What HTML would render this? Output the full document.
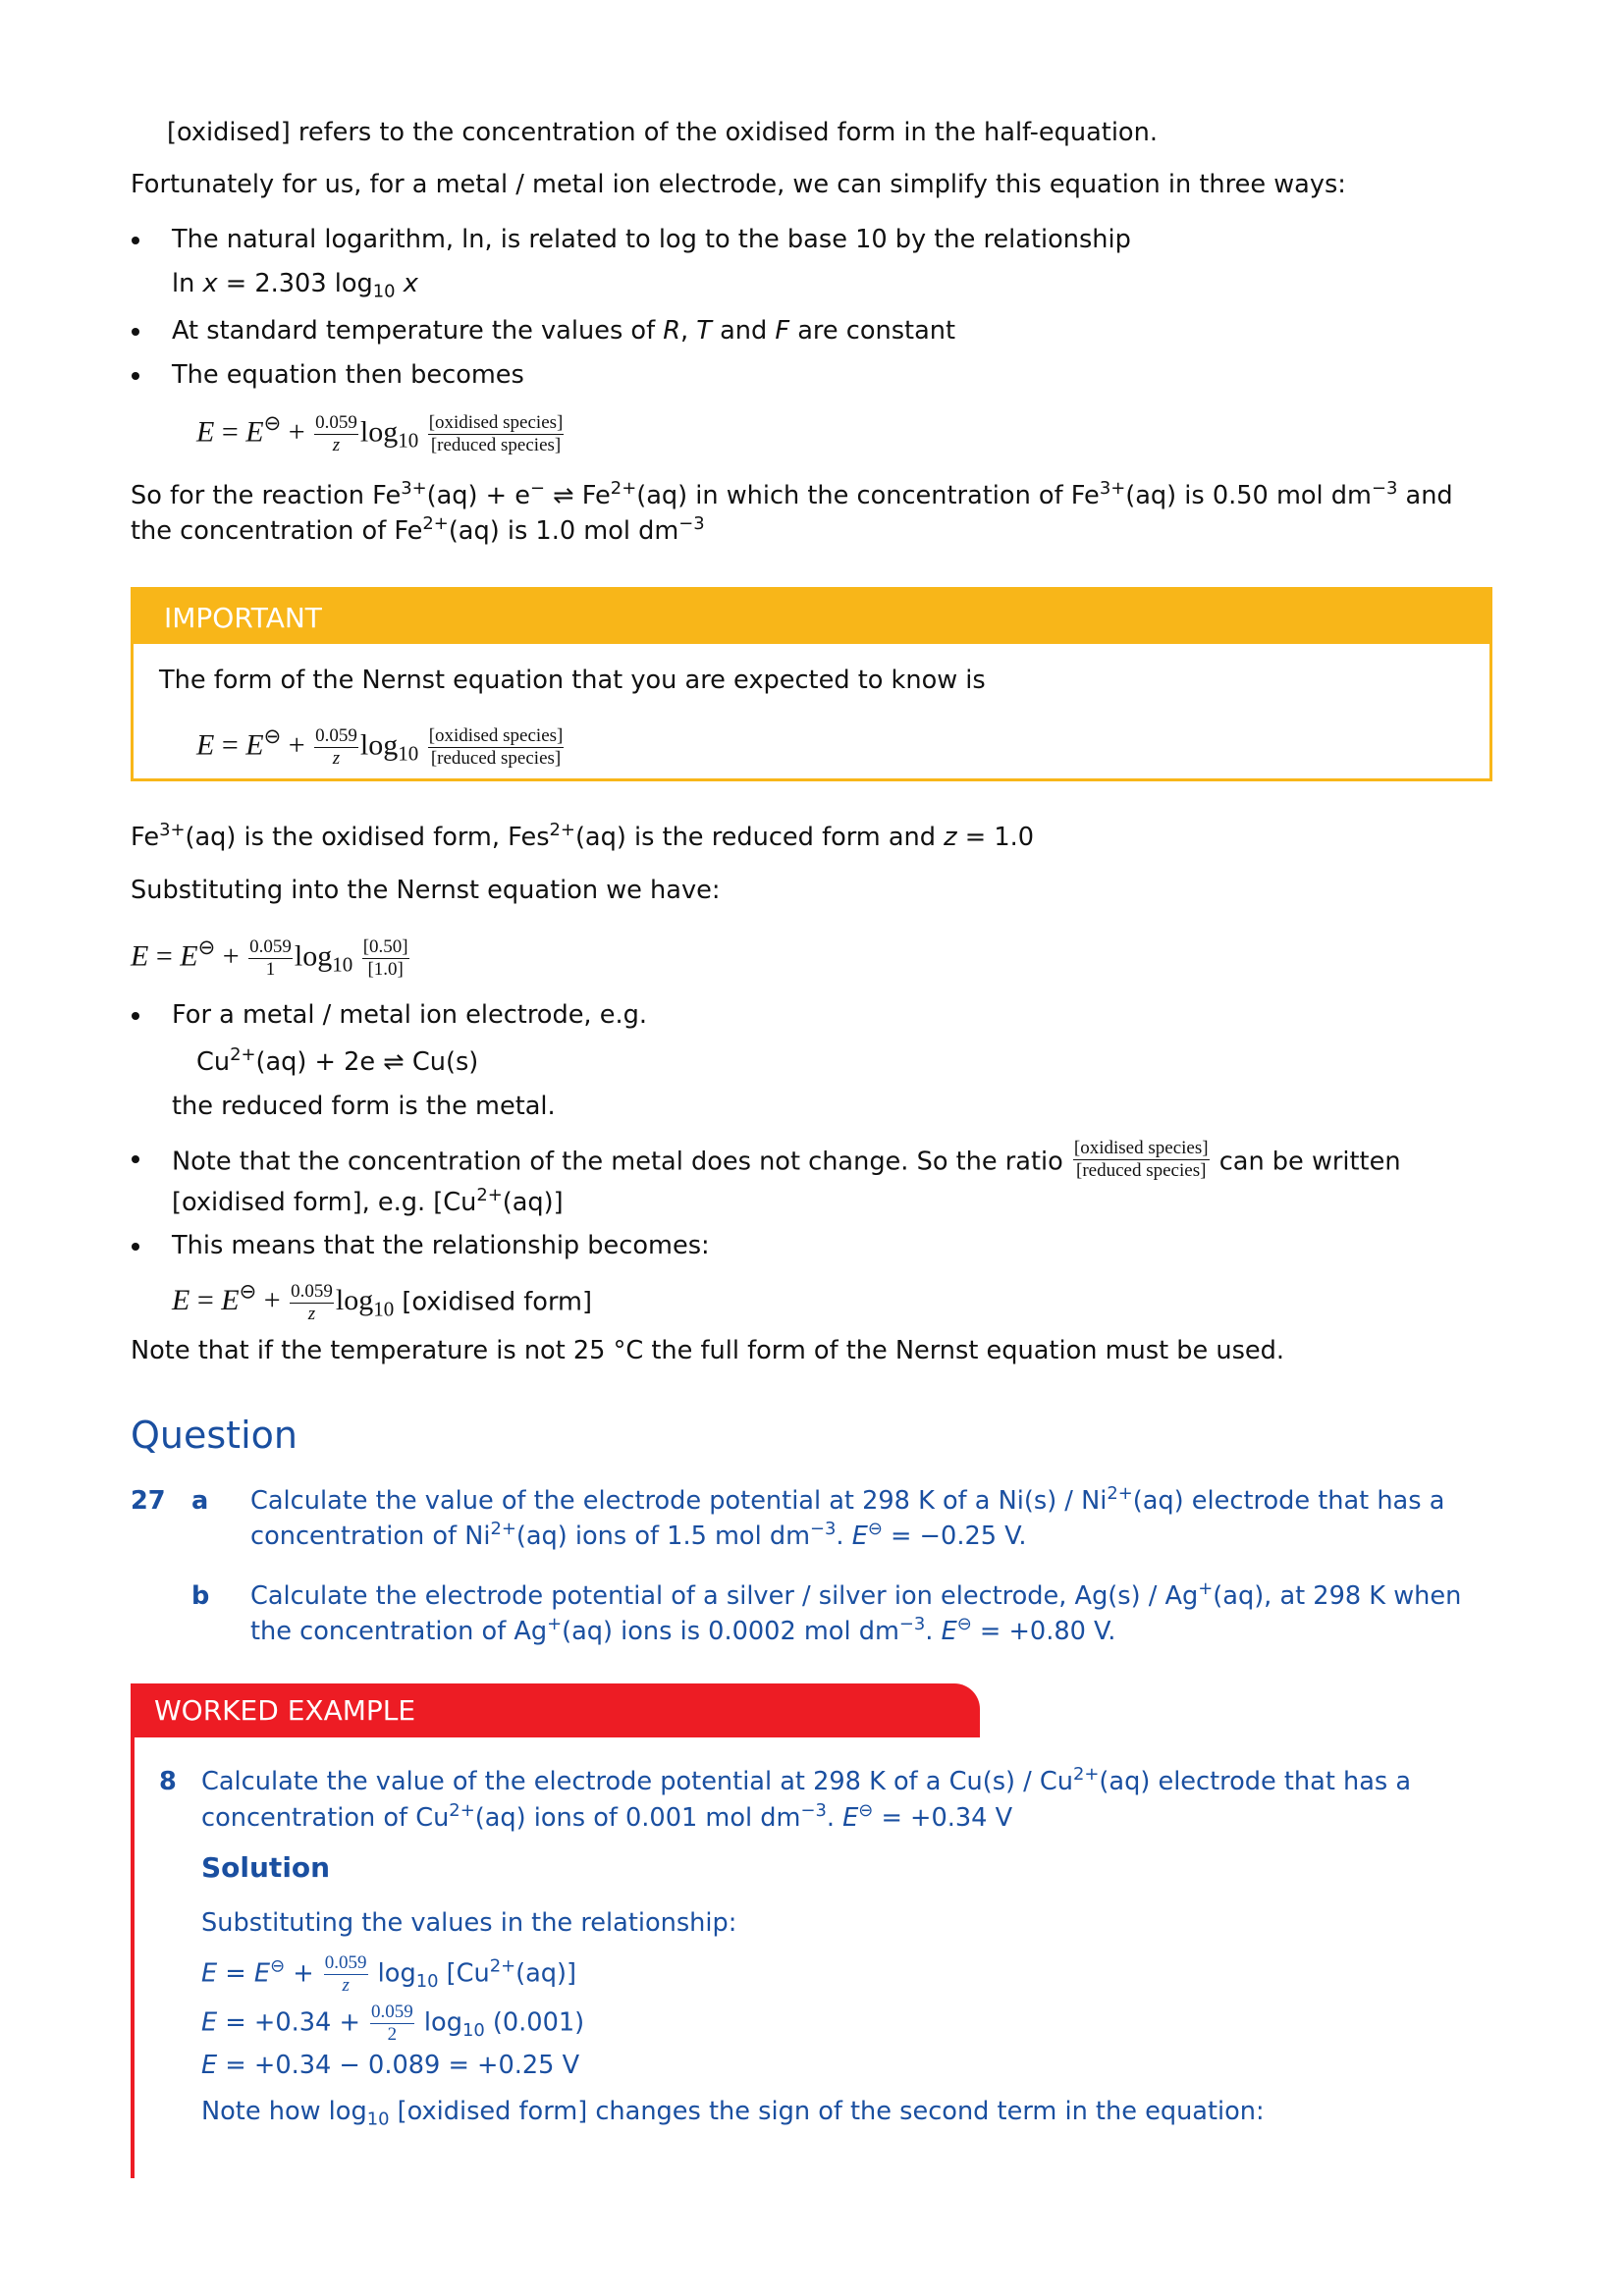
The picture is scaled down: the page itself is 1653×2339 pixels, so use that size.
<!DOCTYPE html>
<html><head><meta charset="utf-8"><style>
body{margin:0;width:1653px;height:2339px;background:#fff;position:relative;font-family:"DejaVu Sans","Liberation Sans",sans-serif;font-size:25.6px;color:#111;}
.l{position:absolute;white-space:nowrap;line-height:30px;}
.b{color:#1a4fa0}
sup{font-size:0.7em;vertical-align:0.55em;line-height:0}
sub{font-size:0.7em;vertical-align:-0.3em;line-height:0}
.dot{position:absolute;width:8px;height:8px;border-radius:50%;background:#111;}
.fr{display:inline-block;vertical-align:middle;text-align:center;font-family:"Liberation Serif",serif;font-size:19px;line-height:22px;margin:0 2px}
.fr span{display:block;padding:0 1px}
.fr span:first-child{border-bottom:1.5px solid currentColor}
.ls{font-family:"Liberation Serif",serif;font-size:30px}
i{font-style:italic}
</style></head><body>

<div class="l" style="left:170px;top:120px">[oxidised] refers to the concentration of the oxidised form in the half-equation.</div>
<div class="l" style="left:133px;top:173px">Fortunately for us, for a metal / metal ion electrode, we can simplify this equation in three ways:</div>
<div class="dot" style="left:134px;top:241px"></div>
<div class="l" style="left:175px;top:229px">The natural logarithm, ln, is related to log to the base 10 by the relationship</div>
<div class="l" style="left:175px;top:274px">ln <i>x</i> = 2.303 log<sub>10</sub> <i>x</i></div>
<div class="dot" style="left:134px;top:334px"></div>
<div class="l" style="left:175px;top:322px">At standard temperature the values of <i>R</i>, <i>T</i> and <i>F</i> are constant</div>
<div class="dot" style="left:134px;top:379px"></div>
<div class="l" style="left:175px;top:367px">The equation then becomes</div>
<div class="l ls" style="left:200px;top:420px"><i>E</i> = <i>E</i><sup>⊖</sup> + <span class="fr"><span>0.059</span><span><i>z</i></span></span>log<sub>10</sub> <span class="fr"><span>[oxidised species]</span><span>[reduced species]</span></span></div>
<div class="l" style="left:133px;top:490px">So for the reaction Fe<sup>3+</sup>(aq) + e<sup>−</sup> ⇌ Fe<sup>2+</sup>(aq) in which the concentration of Fe<sup>3+</sup>(aq) is 0.50 mol dm<sup>−3</sup> and</div>
<div class="l" style="left:133px;top:526px">the concentration of Fe<sup>2+</sup>(aq) is 1.0 mol dm<sup>−3</sup></div>

<div style="position:absolute;left:133px;top:598px;width:1381px;height:195px;border:3px solid #F8B619;border-top:none"></div>
<div style="position:absolute;left:133px;top:598px;width:1387px;height:58px;background:#F8B619"></div>
<div class="l" style="left:167px;top:615px;color:#fff;font-size:28px">IMPORTANT</div>
<div class="l" style="left:162px;top:678px">The form of the Nernst equation that you are expected to know is</div>
<div class="l ls" style="left:200px;top:739px"><i>E</i> = <i>E</i><sup>⊖</sup> + <span class="fr"><span>0.059</span><span><i>z</i></span></span>log<sub>10</sub> <span class="fr"><span>[oxidised species]</span><span>[reduced species]</span></span></div>

<div class="l" style="left:133px;top:838px">Fe<sup>3+</sup>(aq) is the oxidised form, Fes<sup>2+</sup>(aq) is the reduced form and <i>z</i> = 1.0</div>
<div class="l" style="left:133px;top:892px">Substituting into the Nernst equation we have:</div>
<div class="l ls" style="left:133px;top:954px"><i>E</i> = <i>E</i><sup>⊖</sup> + <span class="fr"><span>0.059</span><span>1</span></span>log<sub>10</sub> <span class="fr"><span>[0.50]</span><span>[1.0]</span></span></div>

<div class="dot" style="left:134px;top:1031px"></div>
<div class="l" style="left:175px;top:1019px">For a metal / metal ion electrode, e.g.</div>
<div class="l" style="left:200px;top:1067px">Cu<sup>2+</sup>(aq) + 2e ⇌ Cu(s)</div>
<div class="l" style="left:175px;top:1112px">the reduced form is the metal.</div>
<div class="dot" style="left:134px;top:1177px"></div>
<div class="l" style="left:175px;top:1165px">Note that the concentration of the metal does not change. So the ratio <span class="fr" style="margin-top:-6px"><span>[oxidised species]</span><span>[reduced species]</span></span> can be written</div>
<div class="l" style="left:175px;top:1210px">[oxidised form], e.g. [Cu<sup>2+</sup>(aq)]</div>
<div class="dot" style="left:134px;top:1266px"></div>
<div class="l" style="left:175px;top:1254px">This means that the relationship becomes:</div>
<div class="l" style="left:175px;top:1305px"><span class="ls"><i>E</i> = <i>E</i><sup>⊖</sup> + <span class="fr"><span>0.059</span><span><i>z</i></span></span>log<sub>10</sub></span> [oxidised form]</div>
<div class="l" style="left:133px;top:1361px">Note that if the temperature is not 25 °C the full form of the Nernst equation must be used.</div>

<div class="l b" style="left:133px;top:1442px;font-size:38px;line-height:40px">Question</div>
<div class="l b" style="left:133px;top:1514px;font-weight:bold">27</div>
<div class="l b" style="left:195px;top:1514px;font-weight:bold">a</div>
<div class="l b" style="left:255px;top:1514px">Calculate the value of the electrode potential at 298 K of a Ni(s) / Ni<sup>2+</sup>(aq) electrode that has a</div>
<div class="l b" style="left:255px;top:1550px">concentration of Ni<sup>2+</sup>(aq) ions of 1.5 mol dm<sup>−3</sup>. <i>E</i><sup>⊖</sup> = −0.25 V.</div>
<div class="l b" style="left:195px;top:1611px;font-weight:bold">b</div>
<div class="l b" style="left:255px;top:1611px">Calculate the electrode potential of a silver / silver ion electrode, Ag(s) / Ag<sup>+</sup>(aq), at 298 K when</div>
<div class="l b" style="left:255px;top:1647px">the concentration of Ag<sup>+</sup>(aq) ions is 0.0002 mol dm<sup>−3</sup>. <i>E</i><sup>⊖</sup> = +0.80 V.</div>

<div style="position:absolute;left:133px;top:1715px;width:865px;height:55px;background:#ED1C24;border-top-right-radius:26px"></div>
<div style="position:absolute;left:133px;top:1715px;width:4px;height:504px;background:#ED1C24"></div>
<div class="l" style="left:157px;top:1728px;color:#fff;font-size:28px">WORKED EXAMPLE</div>
<div class="l b" style="left:162px;top:1800px;font-weight:bold">8</div>
<div class="l b" style="left:205px;top:1800px">Calculate the value of the electrode potential at 298 K of a Cu(s) / Cu<sup>2+</sup>(aq) electrode that has a</div>
<div class="l b" style="left:205px;top:1837px">concentration of Cu<sup>2+</sup>(aq) ions of 0.001 mol dm<sup>−3</sup>. <i>E</i><sup>⊖</sup> = +0.34 V</div>
<div class="l b" style="left:205px;top:1888px;font-weight:bold;font-size:28px">Solution</div>
<div class="l b" style="left:205px;top:1944px">Substituting the values in the relationship:</div>
<div class="l b" style="left:205px;top:1989px"><i>E</i> = <i>E</i><sup>⊖</sup> + <span class="fr"><span>0.059</span><span><i>z</i></span></span> log<sub>10</sub> [Cu<sup>2+</sup>(aq)]</div>
<div class="l b" style="left:205px;top:2039px"><i>E</i> = +0.34 + <span class="fr"><span>0.059</span><span>2</span></span> log<sub>10</sub> (0.001)</div>
<div class="l b" style="left:205px;top:2089px"><i>E</i> = +0.34 − 0.089 = +0.25 V</div>
<div class="l b" style="left:205px;top:2136px">Note how log<sub>10</sub> [oxidised form] changes the sign of the second term in the equation:</div>
</body></html>
